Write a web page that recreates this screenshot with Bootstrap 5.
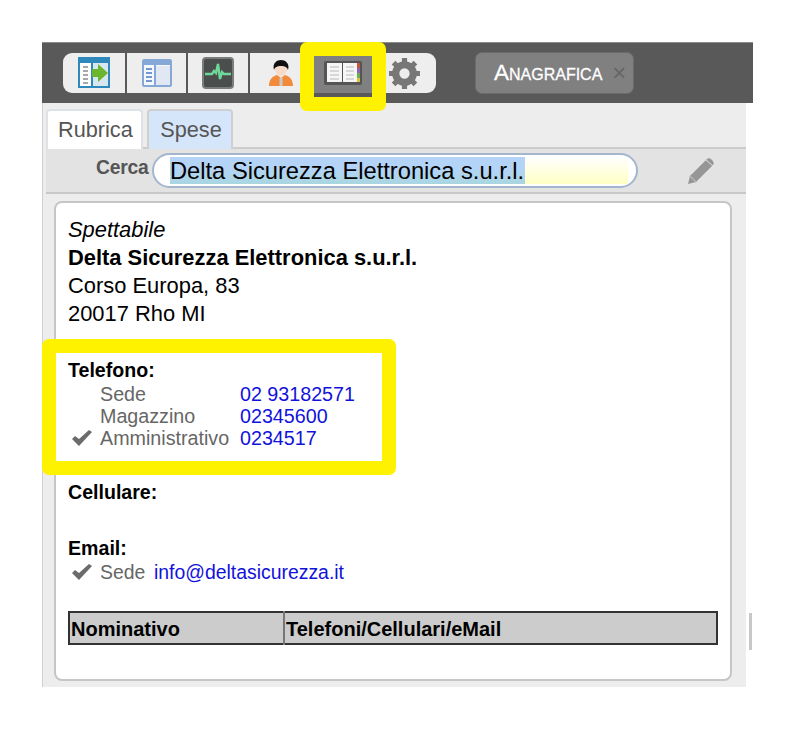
<!DOCTYPE html>
<html lang="it">
<head>
    <meta charset="UTF-8">
    <meta name="viewport" content="width=device-width, initial-scale=1.0">
    <title>Anagrafica</title>
    <link href="https://cdn.jsdelivr.net/npm/bootstrap@5.3.0/dist/css/bootstrap.min.css" rel="stylesheet">
    <style>
        body {
            font-family: "Liberation Sans", Arial, sans-serif;
            background-color: #fff;
            color: #000;
            height: 730px;
            overflow: hidden;
        }
        .app-frame {
            position: relative;
            width: 711px;
            margin: 42px 0 0 42px;
        }
        .top-bar {
            height: 61px;
            background-color: #595959;
            border-top: 1px solid #8c8c8c;
            padding-left: 21px;
        }
        .tool-group {
            height: 40px;
            gap: 2px;
            border-radius: 9px;
            overflow: hidden;
        }
        .tool-btn {
            height: 40px;
            padding: 0;
            border: 0;
            border-radius: 0;
            background-color: #eeeeee;
        }
        .tool-btn svg { filter: blur(.6px); }
        .tool-btn.is-current { background-color: #808080; }
        .tool-btn.gear-btn { padding-right: 2px; }
        .w-62 { width: 62px; }
        .w-59 { width: 59px; }
        .w-60 { width: 60px; }
        .w-61 { width: 61px; }
        .section-pill {
            width: 159px;
            height: 42px;
            margin-left: 39px;
            padding-left: 18px;
            background-color: #808080;
            border: 1px solid #6b6b6b;
            border-radius: 7px;
            color: #fff;
            font-size: 22.5px;
            font-variant: small-caps;
            -webkit-text-stroke: .3px #fff;
        }
        .pill-close {
            margin-left: 10px;
            color: #666;
            font-size: 24px;
            line-height: 1;
            font-variant: normal;
            -webkit-text-stroke: 0;
        }
        .work-row { height: 584px; }
        .work-panel {
            width: 704px;
            background-color: #ededed;
            border-left: 1px solid #d0d0d0;
            padding-left: 3px;
        }
        .tab-strip {
            height: 45px;
            padding-top: 6px;
            border: 0;
            gap: 4px;
        }
        .tab-strip .nav-link {
            height: 40px;
            padding: 0 9px 0 10px;
            margin: 0;
            border: 2px solid #cfcfcf;
            border-bottom: 0;
            border-radius: 4px 4px 0 0;
            background-color: #d6e6fa;
            color: #555;
            font-size: 21.7px;
            line-height: 38px;
        }
        .tab-strip .nav-link.active {
            background-color: #fff;
            color: #555;
            position: relative;
            z-index: 1;
        }
        .tab-strip .rubrica-tab { width: 97px; }
        .tab-strip .spese-tab { width: 86px; padding-left: 11px; text-align: center; }
        .search-bar {
            height: 47px;
            margin-top: -1px;
            background-color: #e3e3e3;
            border-top: 2px solid #cccccc;
            border-bottom: 2px solid #c8c8c8;
            padding-left: 50px;
        }
        .search-label {
            width: 56px;
            color: #555;
            font-size: 19.3px;
            font-weight: 700;
            letter-spacing: -.2px;
            padding-bottom: 4px;
        }
        .search-pill {
            width: 486px;
            height: 35px;
            padding: 2px 8px 2px 16px;
            background-color: #fff;
            border: 2px solid #a4b6ce;
            border-radius: 18px;
        }
        .search-fill {
            height: 100%;
            background: linear-gradient(#fff, #ffffc4);
        }
        .search-text {
            height: 100%;
            padding-right: 1px;
            background: linear-gradient(#b3d4f6 45%, #a9d6e0);
            color: #000;
            font-size: 23.7px;
            line-height: 28px;
        }
        .edit-pencil { margin-left: 49px; }
        .detail-card {
            width: 678px;
            height: 480px;
            margin: 7px 0 0 8px;
            padding: 13px 12px 0 12px;
            border: 2px solid #c6c6c6;
            border-radius: 8px;
        }
        .addr-line {
            font-size: 21.9px;
            line-height: 28px;
        }
        .field-head {
            font-size: 19.6px;
            font-weight: 700;
            line-height: 22px;
        }
        .phone-head { margin-top: 31px; }
        .cell-head { margin-top: 32px; }
        .email-head { margin-top: 34px; }
        .contact-grid {
            display: grid;
            grid-template-columns: 32px 140px auto;
            justify-content: start;
            margin-top: 2px;
            font-size: 19.7px;
            line-height: 22px;
        }
        .contact-grid.mail-grid { grid-template-columns: 32px 54px auto; font-size: 19.4px; }
        .contact-key { color: #666; }
        .contact-val { color: #1212dc; text-decoration: none; }
        .mate-table {
            width: 650px;
            margin: 28px 0 0;
            table-layout: fixed;
            border: 2px solid #333;
        }
        .mate-table th {
            padding: 3px 0 0 1px;
            background-color: #cccccc;
            border: 0;
            box-shadow: none;
            color: #000;
            font-size: 20px;
            line-height: 27px;
        }
        .mate-table th:first-child { width: 215px; border-right: 2px solid #777; }
        .side-strip { width: 7px; }
        .side-thumb {
            width: 3px;
            height: 37px;
            margin: 510px 0 0 3px;
            background-color: #c8c8c8;
        }
        .yellow-mark {
            position: absolute;
            border: 14px solid #fff200;
            border-radius: 7px;
            pointer-events: none;
            z-index: 5;
        }
        .mark-tool { left: 258px; top: 0; width: 86px; height: 69px; }
        .mark-phone { left: 0; top: 297px; width: 354px; height: 136px; }
    </style>
</head>
<body>
    <div class="app-frame">
        <div class="top-bar d-flex align-items-center">
            <div class="tool-group d-flex">
                <button class="btn tool-btn w-62 d-flex align-items-center justify-content-center" type="button" aria-label="Elenco">
                    <svg width="32" height="32" viewBox="0 0 32 32">
                        <rect x="1" y="1" width="30" height="29" fill="#fff" stroke="#2f88bb" stroke-width="2"/>
                        <rect x="1" y="1" width="30" height="5" fill="#2f88bb"/>
                        <rect x="13" y="6" width="2" height="24" fill="#2f88bb"/>
                        <rect x="15" y="6" width="15" height="23" fill="#d8e6ef"/>
                        <path d="M5 10h5M5 14h5M5 18h5M5 22h5M5 26h5" stroke="#a8a8a8" stroke-width="2"/>
                        <path d="M14 12h6V7l10 9-10 9v-5h-6z" fill="#6cb52f"/>
                    </svg>
                </button>
                <button class="btn tool-btn w-59 d-flex align-items-center justify-content-center" type="button" aria-label="Schede">
                    <svg width="30" height="28" viewBox="0 0 30 28">
                        <rect x="1" y="1" width="28" height="26" rx="1" fill="#f4f7fc" stroke="#86a8d6" stroke-width="2"/>
                        <rect x="1" y="1" width="28" height="5" fill="#86a8d6"/>
                        <rect x="12" y="6" width="2" height="20" fill="#86a8d6"/>
                        <rect x="14" y="7" width="14" height="19" fill="#e1e8f4"/>
                        <path d="M4 10h6M4 14h6M4 18h6M4 22h6" stroke="#7198cf" stroke-width="2"/>
                    </svg>
                </button>
                <button class="btn tool-btn w-60 d-flex align-items-center justify-content-center" type="button" aria-label="Monitor">
                    <svg width="32" height="32" viewBox="0 0 32 32">
                        <rect x="1" y="1" width="30" height="30" rx="3" fill="#4a4f4d" stroke="#7c7c7c" stroke-width="2"/>
                        <path d="M3 17h7l2-3 2 2 2-9 2 15 2-7 2 2h7" fill="none" stroke="#6fd79a" stroke-width="2.400"/>
                    </svg>
                </button>
                <button class="btn tool-btn w-61 d-flex align-items-center justify-content-center" type="button" aria-label="Utente">
                    <svg width="24" height="28" viewBox="0 0 24 28">
                        <path d="M0 27c0-7 4-10 8-11l4 3 4-3c4 1 8 4 8 11z" fill="#f28a3c"/>
                        <path d="M10.500 19h3v8h-3z" fill="#c9c9c9"/>
                        <ellipse cx="12" cy="10" rx="6" ry="7" fill="#f6dcc8"/>
                        <path d="M5 11c-2-7 3-10 7-10s9 3 7 10c-1-3-3-4-7-4s-6 1-7 4z" fill="#111"/>
                    </svg>
                </button>
                <button class="btn tool-btn is-current w-60 d-flex align-items-center justify-content-center" type="button" aria-label="Rubrica">
                    <svg width="38" height="26" viewBox="0 0 38 26">
                        <rect x="0" y="1" width="38" height="24" rx="2" fill="#555"/>
                        <rect x="3" y="3" width="15" height="19" fill="#f6f6f6"/>
                        <rect x="19" y="3" width="14" height="19" fill="#f6f6f6"/>
                        <path d="M6 7h9M6 11h9M6 15h9M6 19h9M22 7h8M22 11h8M22 15h8M22 19h8" stroke="#d8d8d8" stroke-width="2"/>
                        <rect x="33" y="3" width="3" height="5" fill="#c8563a"/>
                        <rect x="33" y="8" width="3" height="5" fill="#8d62b8"/>
                        <rect x="33" y="13" width="3" height="5" fill="#6cae4a"/>
                        <rect x="33" y="18" width="3" height="4" fill="#e0c23c"/>
                    </svg>
                </button>
                <button class="btn tool-btn gear-btn w-61 d-flex align-items-center justify-content-center" type="button" aria-label="Impostazioni">
                    <svg width="33" height="33" viewBox="0 0 32 32">
                        <circle cx="16" cy="16" r="8.500" fill="none" stroke="#777" stroke-width="7"/>
                        <path d="M16 1v30M1 16h30M5.400 5.400l21.200 21.200M26.600 5.400L5.400 26.600" stroke="#777" stroke-width="5" stroke-dasharray="5 20 5 0"/>
                    </svg>
                </button>
            </div>
            <div class="section-pill d-flex align-items-center">Anagrafica<span class="pill-close">×</span></div>
        </div>

        <div class="work-row d-flex">
            <div class="work-panel">
                <ul class="nav nav-tabs tab-strip">
                    <li class="nav-item"><a class="nav-link active rubrica-tab" href="#">Rubrica</a></li>
                    <li class="nav-item"><a class="nav-link spese-tab" href="#">Spese</a></li>
                </ul>
                <div class="search-bar d-flex align-items-center">
                    <span class="search-label">Cerca</span>
                    <div class="search-pill d-flex">
                        <span class="search-text">Delta Sicurezza Elettronica s.u.r.l.</span>
                        <span class="search-fill flex-grow-1"></span>
                    </div>
                    <svg class="edit-pencil" width="30" height="28" viewBox="0 0 30 28">
                        <path d="M1 27l2-8L20 2c1-1 3-1 5 1s2 4 1 5L9 25z" fill="#969696"/>
                        <path d="M3 19l6 6" stroke="#b5b5b5" stroke-width="1.500"/>
                        <path d="M19 3l7 6" stroke="#e3e3e3" stroke-width="1"/>
                    </svg>
                </div>
                <div class="detail-card card">
                    <div class="addr-line fst-italic">Spettabile</div>
                    <div class="addr-line fw-bold">Delta Sicurezza Elettronica s.u.r.l.</div>
                    <div class="addr-line">Corso Europa, 83</div>
                    <div class="addr-line">20017 Rho MI</div>

                    <div class="field-head phone-head">Telefono:</div>
                    <div class="contact-grid">
                        <span></span><span class="contact-key">Sede</span><a class="contact-val" href="#">02 93182571</a>
                        <span></span><span class="contact-key">Magazzino</span><a class="contact-val" href="#">02345600</a>
                        <span class="d-flex align-items-center ps-1">
                            <svg width="20" height="16" viewBox="0 0 20 16"><path d="M0 9l3-3 4 3L17 0l3 2L7 16z" fill="#6b6b6b"/></svg>
                        </span><span class="contact-key">Amministrativo</span><a class="contact-val" href="#">0234517</a>
                    </div>

                    <div class="field-head cell-head">Cellulare:</div>

                    <div class="field-head email-head">Email:</div>
                    <div class="contact-grid mail-grid">
                        <span class="d-flex align-items-center ps-1">
                            <svg width="20" height="16" viewBox="0 0 20 16"><path d="M0 9l3-3 4 3L17 0l3 2L7 16z" fill="#6b6b6b"/></svg>
                        </span><span class="contact-key">Sede</span><a class="contact-val" href="#">info@deltasicurezza.it</a>
                    </div>

                    <table class="table mate-table">
                        <thead>
                            <tr><th>Nominativo</th><th>Telefoni/Cellulari/eMail</th></tr>
                        </thead>
                    </table>
                </div>
            </div>
            <div class="side-strip"><div class="side-thumb"></div></div>
        </div>

        <div class="yellow-mark mark-tool"></div>
        <div class="yellow-mark mark-phone"></div>
    </div>
</body>
</html>
